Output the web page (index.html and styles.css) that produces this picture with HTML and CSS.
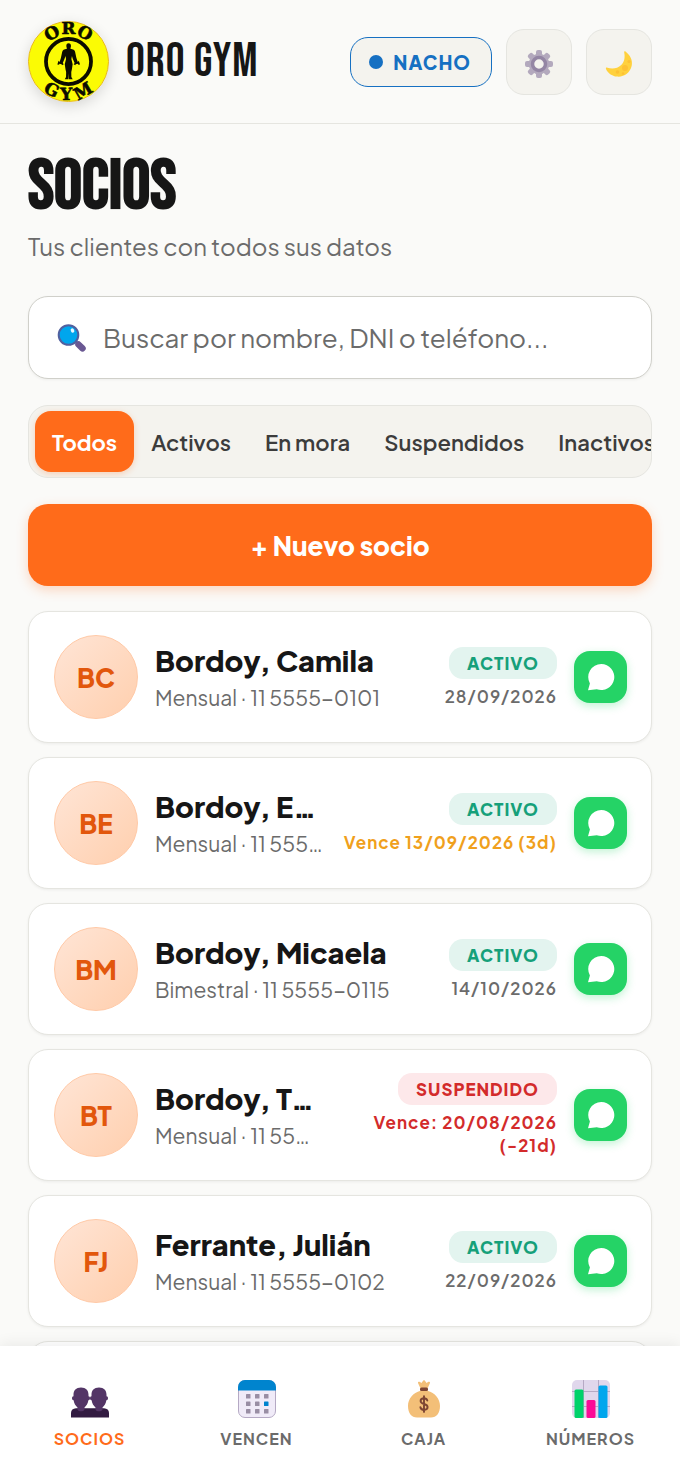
FILE: index.html
```html
<!DOCTYPE html>
<html lang="es">
<head>
    <meta charset="UTF-8">
    <meta name="viewport" content="width=device-width, initial-scale=1.0">
    <title>Oro Gym - Socios</title>
    <link rel="stylesheet" href="styles.css">
</head>
<body>
    <!-- Shared shapes -->
    <svg class="defs" aria-hidden="true">
        <symbol id="icon-chat" viewBox="0 0 28 28">
            <path fill="#fff" d="M14.300 1a13 13 0 1 1-4.500 25.200L1 27.300l1.900-6.900A13 13 0 0 1 14.300 1z"/>
        </symbol>
    </svg>

    <div class="app">
        <header class="topbar">
            <div class="brand">
                <svg class="brand-logo" viewBox="0 0 82 82" role="img" aria-label="Oro Gym">
                    <defs>
                        <path id="arc-top" d="M13.500 41a27.500 27.500 0 0 1 55 0"/>
                        <path id="arc-bottom" d="M2 41a39 39 0 0 0 78 0"/>
                    </defs>
                    <circle cx="41" cy="41" r="40.500" fill="#fbfb04" stroke="#e8b71c"/>
                    <circle cx="41" cy="41" r="22.800" fill="none" stroke="#0c0c00" stroke-width="3.800"/>
                    <text class="logo-letters"><textPath href="#arc-top" startOffset="50%" text-anchor="middle">ORO</textPath></text>
                    <text class="logo-letters wide"><textPath href="#arc-bottom" startOffset="52%" text-anchor="middle">GYM</textPath></text>
                    <path fill="#0c0c00" d="M41 22.500c1.800 0 2.600 1.200 2.500 3l-.6 2.600c2.800.4 4.600 1.200 4.800 3.400l1.300 6 1.400 4.100 1-1.300 1.300 3.800-1.800.3-.4-1-2.200.5-.4.900-1.700-.9 1-1.300-2-4.600-.7-2.600-.6 3.100 1.300 5.200-.8 5.400-.6 2.500.1 5.200 1.400 2.200H41.400l-.3-6-.2 6h-3.700l1.300-2.200.1-5.200-.6-2.500-.8-5.400 1.300-5.200-.6-3.100-.8 2.600-1.900 4.600 1 1.300-1.800.9-.4-.9-2.100-.5-.5 1-1.700-.3 1.200-3.800 1.100 1.300 1.300-4.100 1.300-6c.3-2.200 2-3 4.800-3.400l-.6-2.600c-.1-1.800.7-3 2.200-3z"/>
                </svg>
                <span class="brand-name">ORO GYM</span>
            </div>
            <div class="topbar-actions">
                <button class="user-btn" type="button"><span class="user-dot"></span>NACHO</button>
                <button class="icon-btn" type="button" aria-label="Ajustes">
                    <svg viewBox="0 0 28 28" width="28" height="28">
                        <g fill="#b3a9bd">
                            <rect x="11" y="0" width="6" height="28" rx="2"/>
                            <rect x="11" y="0" width="6" height="28" rx="2" transform="rotate(45 14 14)"/>
                            <rect x="11" y="0" width="6" height="28" rx="2" transform="rotate(90 14 14)"/>
                            <rect x="11" y="0" width="6" height="28" rx="2" transform="rotate(135 14 14)"/>
                        </g>
                        <circle cx="14" cy="14" r="10.300" fill="#b3a9bd"/>
                        <circle cx="14" cy="14" r="6.500" fill="#f4f3ee" stroke="#9486a4" stroke-width="3.500"/>
                    </svg>
                </button>
                <button class="icon-btn" type="button" aria-label="Modo oscuro">
                    <svg viewBox="0 0 28 28" width="28" height="28">
                        <path fill="#ffd13d" d="M20.500 1.500c4.600 3.500 7.500 8.800 6.200 14.300C25 23 18.800 27.300 12 26.600 7 26.100 2.600 23 1 18.900c-.4-1.200.5-1.500 1.400-1.200 4.800 1.600 10.300.8 13.800-2.700 3.500-3.400 3.900-8 3-12.500-.2-1 .5-1.600 1.300-1z"/>
                        <circle cx="20" cy="18" r="3" fill="#fdc134"/>
                        <circle cx="12.500" cy="22" r="1.800" fill="#fdc134"/>
                        <circle cx="24" cy="11.500" r="1.600" fill="#fdc134"/>
                        <circle cx="18" cy="23.500" r="1.200" fill="#fdc134"/>
                    </svg>
                </button>
            </div>
        </header>

        <main class="content">
            <h1>SOCIOS</h1>
            <p class="subtitle">Tus clientes con todos sus datos</p>

            <label class="search">
                <svg viewBox="0 0 30 30" width="30" height="30" aria-hidden="true">
                    <path d="M17 17l4 4" stroke="#4a6ba8" stroke-width="3"/>
                    <path d="M21.500 21.500l4 3.800" stroke="#6a5893" stroke-width="6.500" stroke-linecap="round"/>
                    <circle cx="11.500" cy="12" r="9.800" fill="#00a6ed" stroke="#51609f" stroke-width="2"/>
                    <ellipse cx="15.500" cy="7.500" rx="1.700" ry="2.300" fill="#e8f7ff" transform="rotate(-25 15.500 7.500)"/>
                </svg>
                <input type="search" placeholder="Buscar por nombre, DNI o teléfono..." aria-label="Buscar socio">
            </label>

            <div class="tabs">
                <button class="tab active" type="button">Todos</button>
                <button class="tab" type="button">Activos</button>
                <button class="tab" type="button">En mora</button>
                <button class="tab" type="button">Suspendidos</button>
                <button class="tab" type="button">Inactivos</button>
            </div>

            <button class="new-btn" type="button">+ Nuevo socio</button>

            <ul class="members">
                <li class="member">
                    <span class="avatar">BC</span>
                    <div class="member-info">
                        <p class="member-name">Bordoy, Camila</p>
                        <p class="member-plan">Mensual · 11 5555-0101</p>
                    </div>
                    <div class="member-status">
                        <span class="badge">ACTIVO</span>
                        <span class="due">28/09/2026</span>
                    </div>
                    <button class="chat-btn" type="button" aria-label="Enviar mensaje"><svg><use href="#icon-chat"/></svg></button>
                </li>
                <li class="member">
                    <span class="avatar">BE</span>
                    <div class="member-info">
                        <p class="member-name">Bordoy, E…</p>
                        <p class="member-plan">Mensual · 11 555…</p>
                    </div>
                    <div class="member-status">
                        <span class="badge">ACTIVO</span>
                        <span class="due soon">Vence 13/09/2026 (3d)</span>
                    </div>
                    <button class="chat-btn" type="button" aria-label="Enviar mensaje"><svg><use href="#icon-chat"/></svg></button>
                </li>
                <li class="member">
                    <span class="avatar">BM</span>
                    <div class="member-info">
                        <p class="member-name">Bordoy, Micaela</p>
                        <p class="member-plan">Bimestral · 11 5555-0115</p>
                    </div>
                    <div class="member-status">
                        <span class="badge">ACTIVO</span>
                        <span class="due">14/10/2026</span>
                    </div>
                    <button class="chat-btn" type="button" aria-label="Enviar mensaje"><svg><use href="#icon-chat"/></svg></button>
                </li>
                <li class="member">
                    <span class="avatar">BT</span>
                    <div class="member-info">
                        <p class="member-name">Bordoy, T…</p>
                        <p class="member-plan">Mensual · 11 55…</p>
                    </div>
                    <div class="member-status">
                        <span class="badge suspended">SUSPENDIDO</span>
                        <span class="due late">Vence: 20/08/2026<br>(-21d)</span>
                    </div>
                    <button class="chat-btn" type="button" aria-label="Enviar mensaje"><svg><use href="#icon-chat"/></svg></button>
                </li>
                <li class="member">
                    <span class="avatar">FJ</span>
                    <div class="member-info">
                        <p class="member-name">Ferrante, Julián</p>
                        <p class="member-plan">Mensual · 11 5555-0102</p>
                    </div>
                    <div class="member-status">
                        <span class="badge">ACTIVO</span>
                        <span class="due">22/09/2026</span>
                    </div>
                    <button class="chat-btn" type="button" aria-label="Enviar mensaje"><svg><use href="#icon-chat"/></svg></button>
                </li>
                <li class="member"></li>
            </ul>
        </main>

        <nav class="bottom-nav">
            <a class="nav-item active" href="#socios">
                <svg viewBox="0 0 38 38" aria-hidden="true">
                    <path fill="#321b41" d="M0 37.500V33c0-3 2-4.500 5-4.700h28c3 .2 5 1.700 5 4.700v4.500z"/>
                    <path fill="#533566" d="M10 7.500c5 0 7.500 3 7.500 7.200v1.600c1 .2 1.500.8 1.500 1.900s-.6 1.900-1.600 2.100c-.5 3-2 5.700-3.900 7.200v2.300c-1.500 2-5.500 2-7 0v-2.300c-2-1.500-3.400-4.200-3.900-7.200-1-.2-1.600-1-1.600-2.100s.5-1.700 1.500-1.900v-1.600c0-4.200 2.500-7.200 7.500-7.200z"/>
                    <path fill="#533566" d="M28 7.500c5 0 7.500 3 7.500 7.200v1.600c1 .2 1.500.8 1.500 1.900s-.6 1.900-1.600 2.100c-.5 3-2 5.700-3.900 7.200v2.300c-1.500 2-5.500 2-7 0v-2.300c-2-1.500-3.400-4.200-3.900-7.200-1-.2-1.600-1-1.600-2.100s.5-1.700 1.500-1.900v-1.600c0-4.200 2.500-7.200 7.500-7.200z"/>
                </svg>
                SOCIOS
            </a>
            <a class="nav-item" href="#vencen">
                <svg viewBox="0 0 38 38" aria-hidden="true">
                    <rect x=".5" y=".5" width="37" height="37" rx="6.500" fill="#f0ebf8" stroke="#b5a9c4"/>
                    <path fill="#0084ce" d="M0 10.500V7a7 7 0 0 1 7-7h24a7 7 0 0 1 7 7v3.500z"/>
                    <g fill="#998ea4">
                        <rect x="8" y="14" width="4.500" height="4.500" rx=".6"/>
                        <rect x="17" y="14" width="4.500" height="4.500" rx=".6"/>
                        <rect x="26" y="14" width="4.500" height="4.500" rx=".6"/>
                        <rect x="8" y="21.500" width="4.500" height="4.500" rx=".6"/>
                        <rect x="17" y="21.500" width="4.500" height="4.500" rx=".6"/>
                        <rect x="8" y="29" width="4.500" height="4.500" rx=".6"/>
                        <rect x="17" y="29" width="4.500" height="4.500" rx=".6"/>
                        <rect x="26" y="29" width="4.500" height="4.500" rx=".6"/>
                    </g>
                    <rect x="26" y="21.500" width="4.500" height="4.500" rx=".6" fill="#0084ce"/>
                </svg>
                VENCEN
            </a>
            <a class="nav-item" href="#caja">
                <svg viewBox="0 0 38 38" aria-hidden="true">
                    <path fill="#f3bf78" d="M15.500 8.500L13 3c-.2-1.200 1-1.800 2-1l1.400 1 1.700-2.200c.5-.6 1.300-.6 1.800 0L21.600 3 23 2c1-.8 2.200-.2 2 1l-2.500 5.500v2.300C30 12.800 35 19 35 26c0 7-3.500 11.500-9 11.500H12c-5.500 0-9-4.500-9-11.500 0-7 5-13.200 12.500-15.200z"/>
                    <rect x="15" y="7.500" width="8" height="3.500" rx="1.500" fill="#7d4533"/>
                    <path fill="none" stroke="#7d4533" stroke-width="1.900" stroke-linecap="round" d="M22.300 20.500c-.5-1.500-1.700-2.200-3.300-2.200-2 0-3.400 1-3.400 2.700 0 3.900 7 2.100 7 6 0 1.700-1.500 2.800-3.600 2.800-2 0-3.300-1-3.600-2.600M19 16.300v15.600"/>
                </svg>
                CAJA
            </a>
            <a class="nav-item" href="#numeros">
                <svg viewBox="0 0 38 38" aria-hidden="true">
                    <rect width="38" height="38" rx="5" fill="#e0d7ec"/>
                    <path fill="none" stroke="#b5a9c4" d="M0 11.500h38M0 26.500h38M11.500 0v38M26.500 0v38"/>
                    <rect x="2.500" y="9.500" width="9" height="28.500" rx="1.500" fill="#00d26a"/>
                    <rect x="14.500" y="20" width="9" height="18" rx="1.500" fill="#fb0b97"/>
                    <rect x="26.500" y="5.500" width="9" height="32.500" rx="1.500" fill="#00a6ed"/>
                </svg>
                NÚMEROS
            </a>
        </nav>
    </div>
</body>
</html>
```

FILE: styles.css
```css
:root {
    --orange: #ff6b1a;
    --orange-dark: #e2570c;
    --green: #16a07a;
    --red: #d32b2b;
    --amber: #f0a01c;
    --blue: #1670c2;
    --bg: #fafaf8;
    --soft: #f4f3ee;
    --line: #e5e5e0;
    --ink: #161616;
    --muted: #6b6b6b;
}

* {
    box-sizing: border-box;
}

body {
    margin: 0;
    background-color: var(--bg);
    color: var(--ink);
    font-family: "Plus Jakarta Sans", Inter, sans-serif;
}

button, input {
    font-family: inherit;
}

button {
    border: none;
    cursor: pointer;
}

h1, p, ul {
    margin: 0;
    padding: 0;
}

.defs {
    display: none;
}

.app {
    display: flex;
    flex-direction: column;
    height: 100vh;
}

/* Header */
.topbar {
    display: flex;
    align-items: center;
    justify-content: space-between;
    padding: 21px 28px;
    border-bottom: 1px solid var(--line);
}

.brand {
    display: flex;
    align-items: center;
    gap: 17px;
}

.brand-logo {
    width: 81px;
    height: 81px;
    overflow: visible;
    border-radius: 50%;
    box-shadow: 0 4px 14px rgba(0, 0, 0, 0.14);
}

.logo-letters {
    font-family: "DejaVu Serif", serif;
    font-size: 17px;
    font-weight: 700;
    fill: #0c0c00;
    stroke: #0c0c00;
    stroke-width: 0.6;
}

.logo-letters.wide {
    letter-spacing: 5px;
}

.brand-name, h1 {
    font-family: "Bebas Neue", "Liberation Sans Narrow", sans-serif;
}

.brand-name {
    font-size: 47px;
    letter-spacing: 1px;
}

.topbar-actions {
    display: flex;
    align-items: center;
    gap: 14px;
}

.user-btn {
    display: flex;
    align-items: center;
    gap: 10px;
    height: 50px;
    padding: 0 20px 0 18px;
    border: 1px solid var(--blue);
    border-radius: 18px;
    background-color: var(--soft);
    color: var(--blue);
    font-size: 19px;
    font-weight: 800;
    letter-spacing: 1px;
}

.user-dot {
    width: 14px;
    height: 14px;
    border-radius: 50%;
    background-color: var(--blue);
}

.icon-btn {
    display: flex;
    align-items: center;
    justify-content: center;
    width: 66px;
    height: 66px;
    padding: 4px 0 0;
    border: 1px solid var(--line);
    border-radius: 18px;
    background-color: var(--soft);
}

/* Page content */
.content {
    flex: 1;
    min-height: 0;
    overflow: hidden;
    padding: 31px 28px 0;
}

h1 {
    font-size: 70px;
    font-weight: 700;
    line-height: 64px;
}

.subtitle {
    margin-top: 10px;
    color: var(--muted);
    font-size: 24px;
    line-height: 34px;
}

.search {
    display: flex;
    align-items: center;
    gap: 16px;
    height: 83px;
    margin-top: 33px;
    padding: 0 28px;
    border: 1px solid #d0d0ca;
    border-radius: 20px;
    background-color: #fff;
    box-shadow: 0 1px 3px rgba(0, 0, 0, 0.05);
}

.search input {
    flex: 1;
    min-width: 0;
    padding: 0;
    border: none;
    outline: none;
    background: none;
    font-size: 26px;
}

.search input::placeholder {
    color: var(--muted);
}

.tabs {
    display: flex;
    height: 73px;
    margin-top: 26px;
    padding: 5px 6px;
    overflow: hidden;
    border: 1px solid var(--line);
    border-radius: 20px;
    background-color: var(--soft);
}

.tab {
    flex: none;
    padding: 0 17px;
    border-radius: 16px;
    background: none;
    color: #3c3c3c;
    font-size: 22px;
    font-weight: 600;
}

.tab.active {
    background-color: var(--orange);
    color: #fff;
    font-weight: 700;
    box-shadow: 0 2px 6px rgba(255, 107, 26, 0.25);
}

.new-btn {
    display: block;
    width: 100%;
    height: 82px;
    margin-top: 26px;
    border-radius: 20px;
    background-color: var(--orange);
    color: #fff;
    font-size: 26px;
    font-weight: 800;
    box-shadow: 0 4px 12px rgba(255, 107, 26, 0.25);
}

/* Member list */
.members {
    display: flex;
    flex-direction: column;
    gap: 14px;
    margin-top: 25px;
    list-style: none;
}

.member {
    display: flex;
    align-items: center;
    gap: 17px;
    min-height: 132px;
    padding: 20px 24px 20px 25px;
    border: 1px solid var(--line);
    border-radius: 20px;
    background-color: #fff;
    box-shadow: 0 1px 3px rgba(0, 0, 0, 0.06);
}

.avatar {
    display: flex;
    align-items: center;
    justify-content: center;
    flex: none;
    width: 84px;
    height: 84px;
    border: 1px solid #ffc9a6;
    border-radius: 50%;
    background: linear-gradient(135deg, #ffe5d6, #ffcfae);
    color: var(--orange-dark);
    font-size: 26px;
    font-weight: 800;
}

.member-info {
    flex: 1;
    min-width: 0;
}

.member-name, .member-plan {
    overflow: hidden;
    white-space: nowrap;
    text-overflow: ellipsis;
}

.member-name {
    font-size: 29px;
    font-weight: 800;
    line-height: 42px;
}

.member-plan {
    color: var(--muted);
    font-size: 21px;
    line-height: 34px;
}

.member-status {
    display: flex;
    flex-direction: column;
    align-items: flex-end;
    gap: 6px;
    flex: none;
}

.badge {
    padding: 0 18px;
    border-radius: 14px;
    background-color: #e3f4ef;
    color: var(--green);
    font-size: 17px;
    font-weight: 800;
    letter-spacing: 1px;
    line-height: 32px;
}

.badge.suspended {
    background-color: #fde8ea;
    color: var(--red);
}

.due {
    color: var(--muted);
    font-size: 17px;
    font-weight: 600;
    letter-spacing: 1px;
    line-height: 23px;
    text-align: right;
}

.due.soon {
    color: var(--amber);
    font-weight: 700;
}

.due.late {
    color: var(--red);
    font-weight: 700;
}

.chat-btn {
    display: flex;
    align-items: center;
    justify-content: center;
    flex: none;
    width: 53px;
    height: 52px;
    padding: 0;
    border-radius: 16px;
    background-color: #25d366;
    box-shadow: 0 3px 8px rgba(37, 211, 102, 0.28);
}

.chat-btn svg {
    width: 28px;
    height: 28px;
}

/* Bottom navigation */
.bottom-nav {
    display: flex;
    flex: none;
    height: 126px;
    padding: 34px 6px 0;
    background-color: #fff;
    box-shadow: 0 -2px 14px rgba(0, 0, 0, 0.07);
    z-index: 1;
}

.nav-item {
    display: flex;
    flex: 1;
    flex-direction: column;
    align-items: center;
    gap: 9px;
    color: var(--muted);
    font-size: 16px;
    font-weight: 700;
    letter-spacing: 1px;
    line-height: 24px;
    text-decoration: none;
}

.nav-item svg {
    width: 38px;
    height: 38px;
}

.nav-item.active {
    color: var(--orange);
}
```
